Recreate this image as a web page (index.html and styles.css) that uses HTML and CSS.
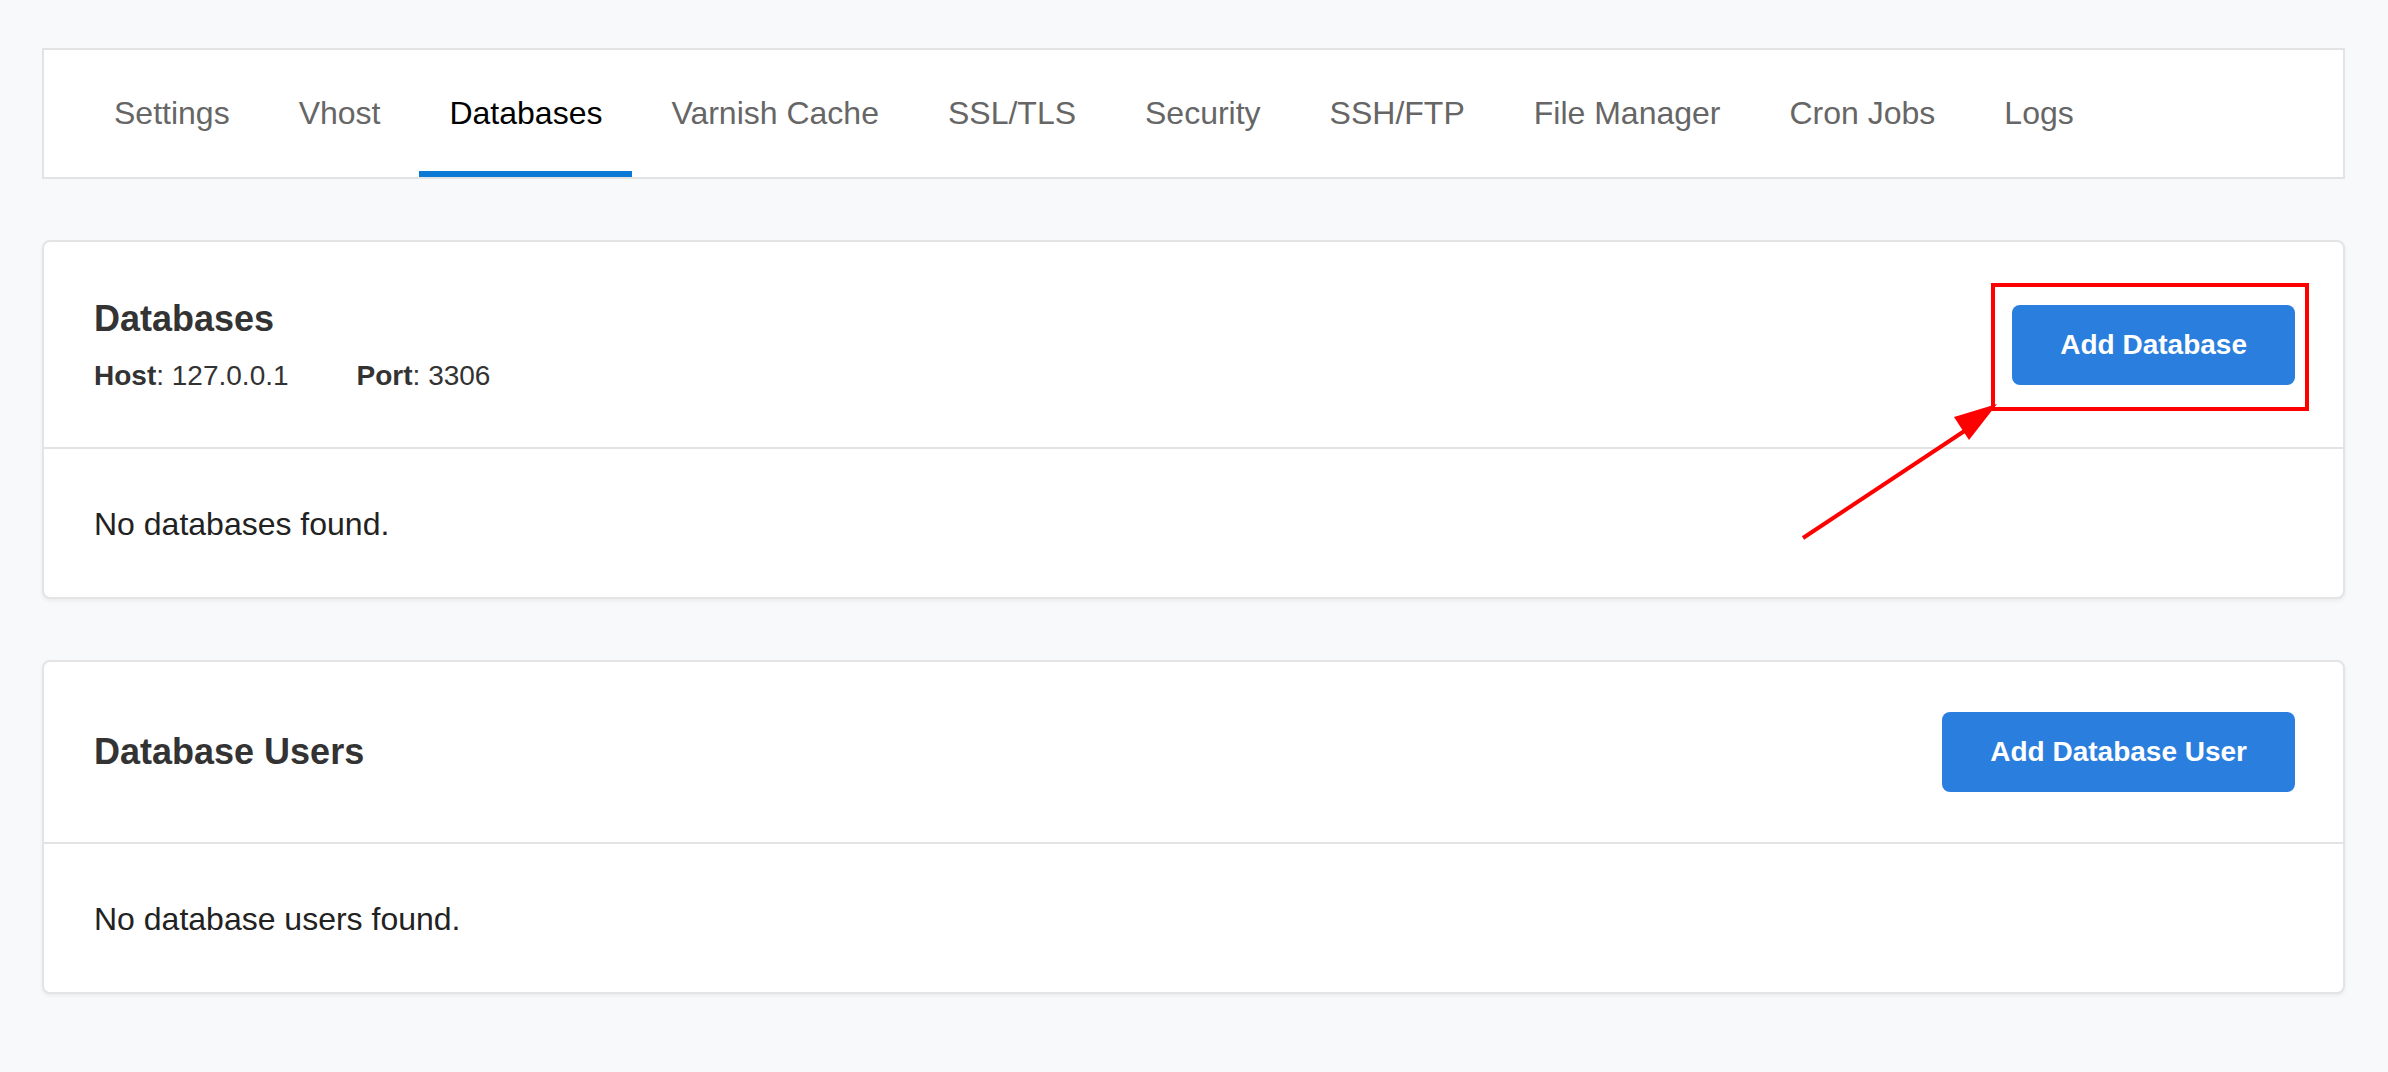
FILE: index.html
```html
<!DOCTYPE html>
<html lang="en">
<head>
  <meta charset="UTF-8" />
  <meta name="viewport" content="width=device-width, initial-scale=1" />
  <title>Databases</title>
  <link rel="stylesheet" href="styles.css">
</head>
<body>
  <div class="page">
    <nav class="tabs">
      <a class="tab">Settings</a>
      <a class="tab">Vhost</a>
      <a class="tab active">Databases</a>
      <a class="tab">Varnish Cache</a>
      <a class="tab">SSL/TLS</a>
      <a class="tab">Security</a>
      <a class="tab">SSH/FTP</a>
      <a class="tab">File Manager</a>
      <a class="tab">Cron Jobs</a>
      <a class="tab">Logs</a>
    </nav>

    <section class="card">
      <div class="card-header">
        <div>
          <h2 class="card-title">Databases</h2>
          <div class="meta">
            <span class="meta-item"><b>Host</b>: 127.0.0.1</span>
            <span class="meta-item"><b>Port</b>: 3306</span>
          </div>
        </div>
        <button class="btn">Add Database</button>
      </div>
      <div class="card-body">No databases found.</div>
    </section>

    <section class="card">
      <div class="card-header">
        <h2 class="card-title">Database Users</h2>
        <button class="btn">Add Database User</button>
      </div>
      <div class="card-body">No database users found.</div>
    </section>
  </div>

  <!-- annotation drawn over the screenshot -->
  <svg class="annotation" width="2388" height="1072" viewBox="0 0 2388 1072">
    <rect x="1993" y="285" width="314" height="124" fill="none" stroke="#ff0000" stroke-width="4" />
    <line x1="1803" y1="538" x2="1972" y2="426" stroke="#ff0000" stroke-width="4" />
    <polygon points="1954,417 1997,404 1969,440" fill="#ff0000" />
  </svg>
</body>
</html>
```

FILE: styles.css
```css
body {
  margin: 0;
  background-color: #f8f9fa;
  font-family: "Liberation Sans", Arial, sans-serif;
  color: #333;
}
.page {
  padding: 48px 43px 40px 42px;
}
.tabs {
  display: flex;
  gap: 9px;
  background-color: #fff;
  border: 2px solid #e3e3e3;
  padding: 0 40px;
  margin-bottom: 61px;
}
.tab {
  padding: 45px 30px 40px;
  font-size: 32px;
  line-height: 36px;
  color: #666;
  border-bottom: 6px solid transparent;
  cursor: pointer;
}
.tab.active {
  color: #000;
  border-bottom-color: #0a78d4;
}
.card {
  background-color: #fff;
  border: 2px solid #e4e4e4;
  border-radius: 8px;
  box-shadow: 0 2px 4px rgba(0, 0, 0, 0.06);
  margin-bottom: 61px;
}
.card-header {
  display: flex;
  justify-content: space-between;
  align-items: center;
  padding: 50px 48px 50px 50px;
  border-bottom: 2px solid #e3e3e3;
}
.card-title {
  margin: 0;
  font-size: 36px;
  line-height: 54px;
  font-weight: bold;
  color: #333;
}
.meta {
  display: flex;
  margin-top: 9px;
  font-size: 28px;
  line-height: 42px;
  color: #333;
}
.meta-item {
  margin-right: 68px;
}
.btn {
  height: 80px;
  padding: 0 48px;
  border: none;
  border-radius: 8px;
  background-color: #2a7ede;
  color: #fff;
  font-family: "Liberation Sans", Arial, sans-serif;
  font-size: 28px;
  font-weight: bold;
  cursor: pointer;
}
.card-body {
  padding: 52px 50px 50px;
  font-size: 32px;
  line-height: 46px;
  color: #222;
}
.annotation {
  position: absolute;
  top: 0;
  left: 0;
  pointer-events: none;
}
```
